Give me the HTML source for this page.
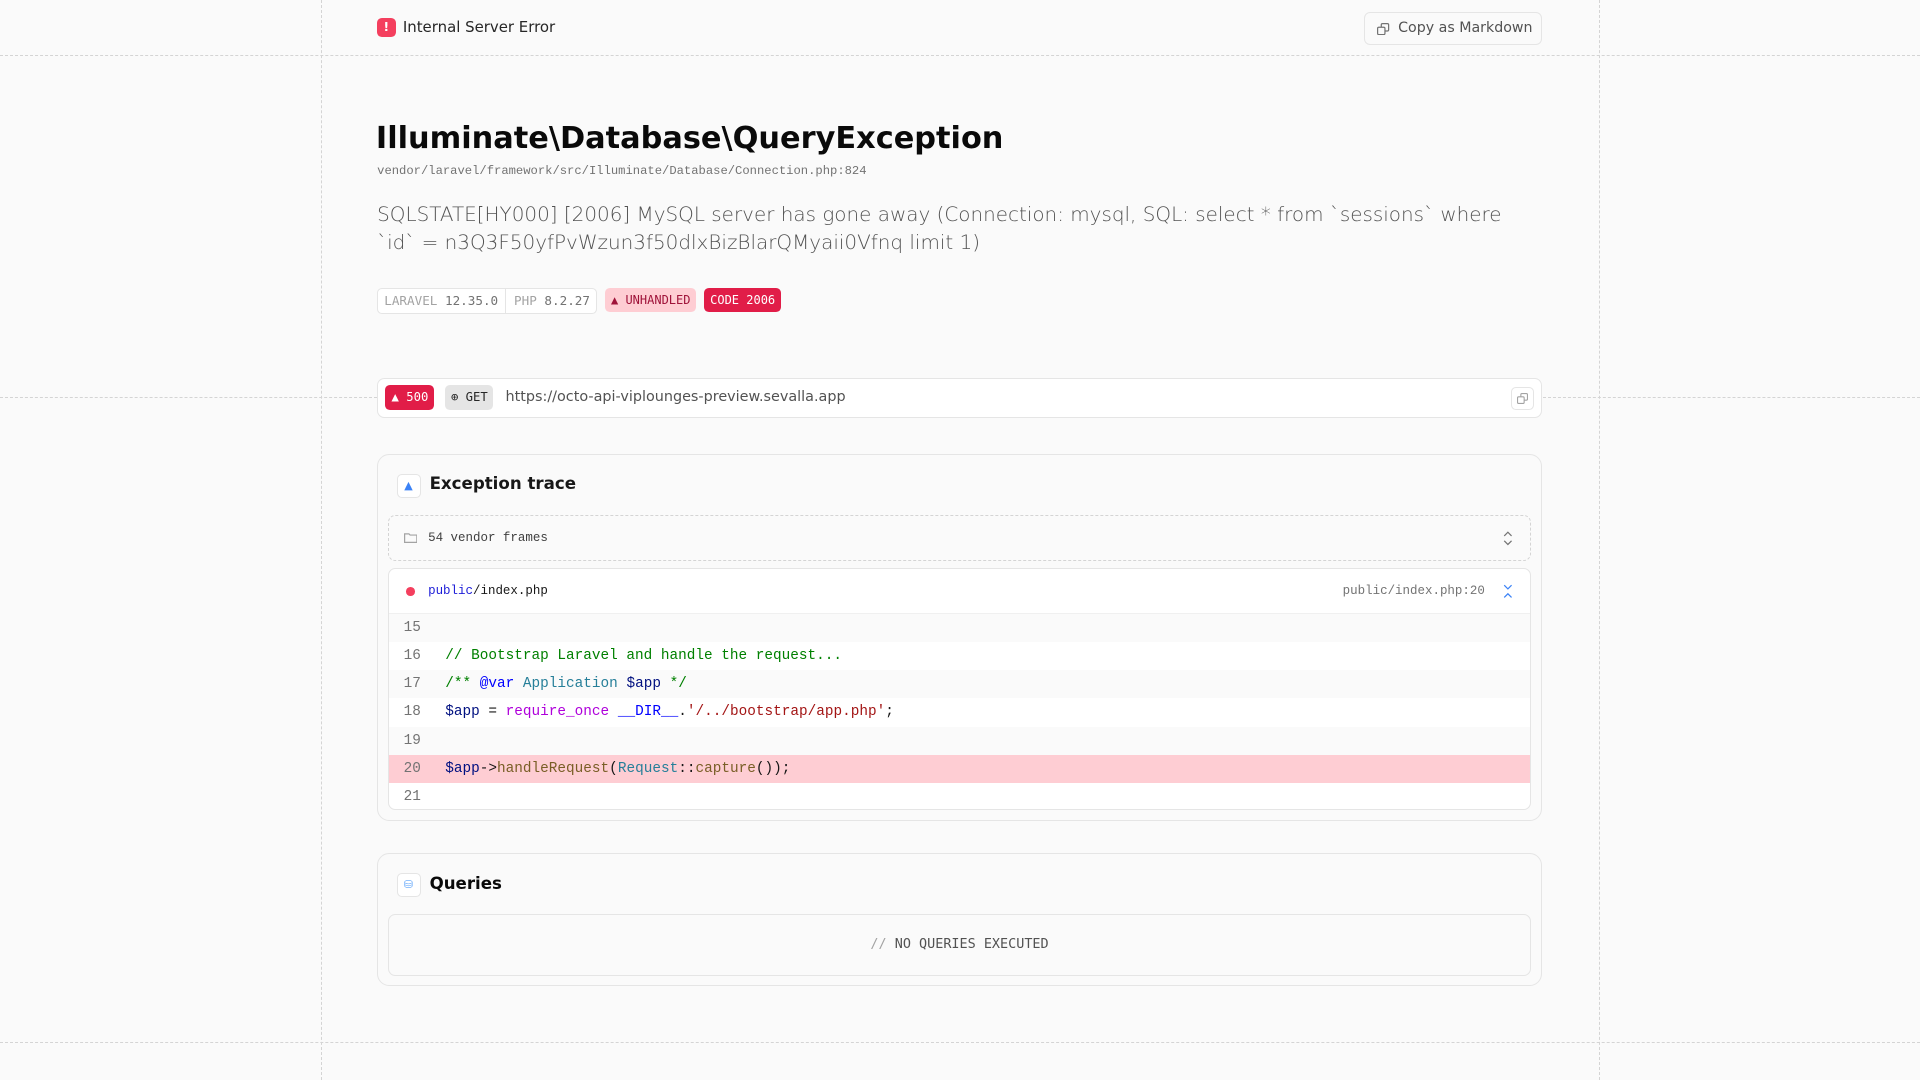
<!DOCTYPE html>
<html><head><meta charset="utf-8"><style>
html,body{margin:0;padding:0;background:#fafafa;}
body{width:1568px;height:882px;zoom:1.22449;position:relative;overflow:hidden;font-family:"DejaVu Sans","Liberation Sans",sans-serif;color:#171717;}
.a{position:absolute;}
.vl{position:absolute;top:0;bottom:0;width:0;border-left:1px dashed #d4d4d4;}
.hl{position:absolute;left:0;right:0;height:0;border-top:1px dashed #d4d4d4;}
.mono{font-family:"Liberation Mono","DejaVu Sans Mono",monospace;}
.bm{font-family:"DejaVu Sans Mono",monospace;}
.card{position:absolute;left:308px;width:950px;border:1px solid #e5e5e5;border-radius:10px;background:#fafafa;}
.code .row{height:23px;line-height:23px;font-size:11.75px;position:relative;}
.code .row .n{position:absolute;left:12px;color:#737373;}
.code .row .t{position:absolute;left:46px;white-space:pre;}
.cm{color:#008000}.kw{color:#0000ff}.ty{color:#267f99}.v{color:#001080}.fn{color:#795e26}.st{color:#a31515}.pk{color:#af00db}
</style></head><body>
<div class="vl" style="left:262px"></div>
<div class="vl" style="left:1306px"></div>
<div class="hl" style="top:45px"></div>
<div class="hl" style="top:851px"></div>
<div class="a" style="top:324px;left:0;width:308px;border-top:1px dashed #d4d4d4"></div>
<div class="a" style="top:324px;left:1260px;width:308px;border-top:1px dashed #d4d4d4"></div>

<div class="a" style="left:308px;top:15px;width:15px;height:15px;border-radius:4px;background:#f43f5e;color:#fff;font-size:10px;font-weight:bold;text-align:center;line-height:15px">!</div>
<div class="a" style="left:329px;top:14px;font-size:12.2px;line-height:17px;color:#262626;white-space:nowrap">Internal Server Error</div>
<div class="a" style="left:1114px;top:10px;width:144px;height:25px;border:1px solid #e5e5e5;border-radius:5px;background:#fafafa;font-size:11.6px;line-height:25px;color:#525252;white-space:nowrap">
<svg class="a" style="left:10px;top:8px" width="10" height="10" viewBox="0 0 10 10" fill="none" stroke="#737373" stroke-width="1"><rect x="3.5" y="0.5" width="6" height="6" rx="1"/><rect x="0.5" y="3.5" width="6" height="6" rx="1" fill="#fafafa"/></svg>
<span class="a" style="left:27px">Copy as Markdown</span></div>

<div class="a" style="left:307px;top:96px;font-size:24.8px;font-weight:bold;color:#0a0a0a;line-height:34px;white-space:nowrap">Illuminate\Database\QueryException</div>
<div class="a mono" style="left:308px;top:133px;font-size:9.95px;color:#737373;line-height:14px;white-space:nowrap">vendor/laravel/framework/src/Illuminate/Database/Connection.php:824</div>
<div class="a" style="left:308px;top:163px;width:950px;font-size:16.3px;line-height:23px;color:#525252;font-weight:300">SQLSTATE[HY000] [2006] MySQL server has gone away (Connection: mysql, SQL: select * from `sessions` where `id` = n3Q3F50yfPvWzun3f50dlxBizBlarQMyaii0Vfnq limit 1)</div>

<div class="a bm" style="left:308px;top:235px;width:178px;height:20px;border:1px solid #e5e5e5;border-radius:4px;background:#fff;font-size:10.3px;line-height:20px;white-space:nowrap">
<span class="a" style="left:5px;color:#a3a3a3">LARAVEL <span style="color:#737373">12.35.0</span></span>
<span class="a" style="left:104px;top:0;height:20px;border-left:1px solid #e5e5e5"></span>
<span class="a" style="left:111px;color:#a3a3a3">PHP <span style="color:#737373">8.2.27</span></span></div>
<div class="a bm" style="left:494px;top:235px;width:74px;height:20px;border-radius:4px;background:#fecdd3;color:#9f1239;font-size:9.8px;line-height:20px;white-space:nowrap"><span style="margin-left:5px">▲</span> UNHANDLED</div>
<div class="a bm" style="left:575px;top:235px;width:63px;height:20px;border-radius:4px;background:#e11d48;color:#fff;font-size:9.8px;line-height:20px;text-align:center">CODE 2006</div>

<div class="a" style="left:308px;top:309px;width:950px;height:31px;border:1px solid #e5e5e5;border-radius:6px;background:#fff">
<div class="a bm" style="left:6px;top:5px;width:40px;height:20px;border-radius:4px;background:#e11d48;color:#fff;font-size:10px;line-height:20px;text-align:center">▲ 500</div>
<div class="a bm" style="left:55px;top:5px;width:39px;height:20px;border-radius:4px;background:#e5e5e5;color:#262626;font-size:10px;line-height:20px;text-align:center">⊕ GET</div>
<div class="a" style="left:104px;top:0;font-size:11.75px;line-height:31px;color:#525252;white-space:nowrap">https://octo-api-viplounges-preview.sevalla.app</div>
<div class="a" style="right:6px;top:6px;width:17px;height:17px;border:1px solid #e5e5e5;border-radius:4px">
<svg class="a" style="left:4px;top:4px" width="9" height="9" viewBox="0 0 10 10" fill="none" stroke="#a3a3a3" stroke-width="1"><rect x="3.5" y="0.5" width="6" height="6" rx="1"/><rect x="0.5" y="3.5" width="6" height="6" rx="1" fill="#fff"/></svg></div>
</div>

<div class="card" style="top:371px;height:298px">
<div class="a" style="left:15px;top:15px;width:18px;height:18px;border:1px solid #e5e5e5;border-radius:4px;background:#fff;color:#3b82f6;font-size:9px;text-align:center;line-height:18px">▲</div>
<div class="a" style="left:42px;top:14px;font-size:13.6px;font-weight:bold;line-height:20px;color:#171717;white-space:nowrap">Exception trace</div>
<div class="a" style="left:8px;top:49px;width:932px;height:36px;border:1px dashed #d4d4d4;border-radius:6px">
<svg class="a" style="left:12px;top:13px" width="11" height="9" viewBox="0 0 11 9" fill="none" stroke="#a3a3a3"><path d="M0.5 1.5h3.5l1 1h5.5v6h-10z"/></svg>
<div class="a mono" style="left:32px;top:0;line-height:36px;font-size:10.2px;color:#404040;white-space:nowrap">54 vendor frames</div>
<svg class="a" style="right:14px;top:12px" width="8" height="12" viewBox="0 0 8 12" fill="none" stroke="#737373" stroke-width="1"><path d="M1 4l3-3 3 3M1 8l3 3 3-3"/></svg></div>
<div class="a code" style="left:8px;top:92px;width:932px;height:196px;border:1px solid #e5e5e5;border-radius:6px;background:#fff;overflow:hidden">
<div style="height:36px;border-bottom:1px solid #f0f0f0;position:relative">
<div class="a" style="left:14px;top:15px;width:7px;height:7px;border-radius:50%;background:#f43f5e"></div>
<div class="a mono" style="left:32px;top:0;line-height:36px;font-size:10.2px;white-space:nowrap"><span style="color:#1d1dd8">public</span>/index.php</div>
<div class="a mono" style="right:37px;top:0;line-height:36px;font-size:10.2px;color:#737373;white-space:nowrap">public/index.php:20</div>
<svg class="a" style="right:14px;top:12px" width="8" height="12" viewBox="0 0 8 12" fill="none" stroke="#3b82f6" stroke-width="1"><path d="M1 1l3 3 3-3M1 11l3-3 3 3"/></svg></div>
<div class="mono">
<div class="row" style="background:#fafafa"><span class="n">15</span></div>
<div class="row"><span class="n">16</span><span class="t cm">// Bootstrap Laravel and handle the request...</span></div>
<div class="row" style="background:#fafafa"><span class="n">17</span><span class="t"><span class="cm">/** </span><span class="kw">@var</span> <span class="ty">Application</span> <span class="v">$app</span><span class="cm"> */</span></span></div>
<div class="row"><span class="n">18</span><span class="t"><span class="v">$app</span> = <span class="pk">require_once</span> <span class="kw">__DIR__</span>.<span class="st">'/../bootstrap/app.php'</span>;</span></div>
<div class="row" style="background:#fafafa"><span class="n">19</span></div>
<div class="row" style="background:#fecdd3"><span class="n">20</span><span class="t"><span class="v">$app</span>-&gt;<span class="fn">handleRequest</span>(<span class="ty">Request</span>::<span class="fn">capture</span>());</span></div>
<div class="row"><span class="n">21</span></div>
</div></div>
</div>

<div class="card" style="top:697px;height:107px">
<div class="a" style="left:15px;top:15px;width:18px;height:18px;border:1px solid #e5e5e5;border-radius:4px;background:#fff;color:#60a5fa;font-size:9px;text-align:center;line-height:18px">⛁</div>
<div class="a" style="left:42px;top:14px;font-size:13.6px;font-weight:bold;line-height:20px;color:#0a0a0a">Queries</div>
<div class="a" style="left:8px;top:49px;width:932px;height:49px;border:1px solid #e5e5e5;border-radius:6px;background:#fafafa;text-align:center;line-height:49px;font-size:11px;color:#525252" ><span class="bm"><span style="color:#a3a3a3">//</span> NO QUERIES EXECUTED</span></div>
</div>
</body></html>
